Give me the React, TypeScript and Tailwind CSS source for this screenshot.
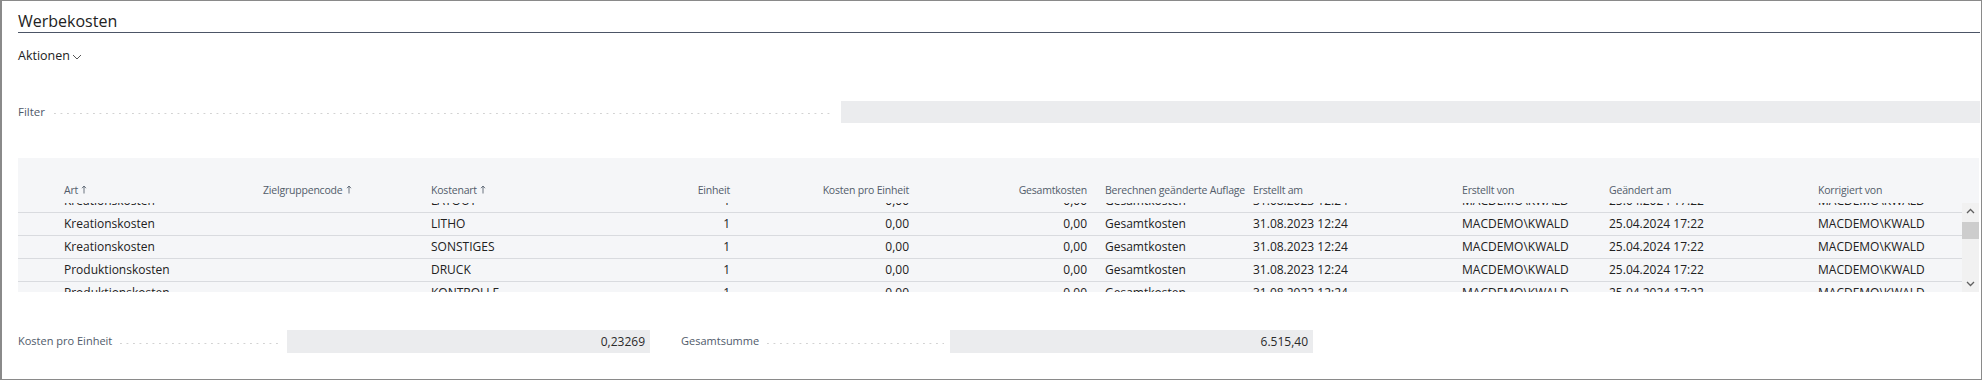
import React from 'react';

type Col = {
  label: string;
  w: string;
  right?: boolean;
  sort?: boolean;
};

const COLS: Col[] = [
  { label: 'Art', w: 'w-[199px] px-[6px]', sort: true },
  { label: 'Zielgruppencode', w: 'w-[168px] px-[6px]', sort: true },
  { label: 'Kostenart', w: 'w-[175px] px-[6px]', sort: true },
  { label: 'Einheit', w: 'w-[136px] px-[6px]', right: true },
  { label: 'Kosten pro Einheit', w: 'w-[179px] px-[6px]', right: true },
  { label: 'Gesamtkosten', w: 'w-[184px] pl-[6px] pr-[12px]', right: true },
  { label: 'Berechnen geänderte Auflage', w: 'w-[148px] px-[6px]' },
  { label: 'Erstellt am', w: 'w-[209px] px-[6px]' },
  { label: 'Erstellt von', w: 'w-[147px] px-[6px]' },
  { label: 'Geändert am', w: 'w-[209px] px-[6px]' },
  { label: 'Korrigiert von', w: 'w-[150px] px-[6px]' },
];

const ROWS: [string, string][] = [
  ['Kreationskosten', 'LAYOUT'],
  ['Kreationskosten', 'LITHO'],
  ['Kreationskosten', 'SONSTIGES'],
  ['Produktionskosten', 'DRUCK'],
  ['Produktionskosten', 'KONTROLLE'],
];

function rowValues(art: string, kostenart: string) {
  return [
    art,
    '',
    kostenart,
    '1',
    '0,00',
    '0,00',
    'Gesamtkosten',
    '31.08.2023 12:24',
    'MACDEMO\\KWALD',
    '25.04.2024 17:22',
    'MACDEMO\\KWALD',
  ];
}

function SortArrow() {
  return (
    <svg width="6" height="9" viewBox="0 0 6 9" className="ml-[3px] mb-[3px] inline-block" fill="none">
      <path d="M3 8.5V1M1 3.2L3 1l2 2.2" stroke="#5b6573" strokeWidth="0.9" />
    </svg>
  );
}

function Dots() {
  return (
    <div className="flex-1 h-px mt-[3px] bg-[linear-gradient(to_right,#d2d2d2_2px,transparent_2px)] bg-[length:6.5px_1px] bg-repeat-x" />
  );
}

function Field({ label, value }: { label: string; value: string }) {
  return (
    <div className="flex items-center">
      <div className="w-[263px] flex items-center gap-[8px]">
        <span className="text-[11px] text-[#4f5a6a]">{label}</span>
        <Dots />
      </div>
      <div className="ml-[6px] w-[363px] h-[23px] bg-[#ebecee] px-[5px] text-right text-[12px] leading-[23px] text-[#2a2a2a]">
        {value}
      </div>
    </div>
  );
}

export default function App() {
  return (
    <div className="w-[1982px] h-[380px] border border-l-2 border-[#8a8a8a] pl-[16px] pr-[1px] pt-[10px] bg-white font-['Open_Sans',sans-serif] overflow-hidden">
      {/* Title */}
      <div className="border-b border-[#4c5566] pb-[1px]">
        <h1 className="text-[16px] leading-[20px] text-[#222]">Werbekosten</h1>
      </div>

      {/* Actions */}
      <div className="mt-[14px] flex items-center h-[18px] text-[12.5px] text-[#222]">
        Aktionen
        <svg width="10" height="6" viewBox="0 0 10 6" className="ml-[2px] mt-[2px]" fill="none">
          <path d="M1 1l4 4 4-4" stroke="#444" strokeWidth="0.9" />
        </svg>
      </div>

      {/* Filter */}
      <div className="mt-[36px] flex items-center">
        <div className="w-[815px] flex items-center gap-[9px]">
          <span className="text-[11.5px] text-[#4f5a6a]">Filter</span>
          <Dots />
        </div>
        <div className="ml-[8px] flex-1 h-[22px] bg-[#ebecee]" />
      </div>

      {/* Table */}
      <div className="mt-[35px] bg-[#f5f6f8] w-[1961px]">
        <div className="flex items-end h-[45px] pb-[6px]">
          <div className="w-[40px]" />
          {COLS.map((c) => (
            <div
              key={c.label}
              className={`${c.w} ${c.right ? 'text-right' : 'text-left'} text-[10.5px] tracking-[-0.2px] leading-[14px] text-[#525c6a] whitespace-nowrap`}
            >
              {c.label}
              {c.sort && <SortArrow />}
            </div>
          ))}
        </div>

        <div className="flex h-[89px]">
          <div className="w-[1944px] overflow-hidden">
            <div className="-mt-[13px]">
              {ROWS.map(([art, ka]) => (
                <div key={ka} className="flex h-[23px] border-b border-[#d9dbdf]">
                  <div className="w-[40px]" />
                  {rowValues(art, ka).map((v, i) => (
                    <div
                      key={i}
                      className={`${COLS[i].w} ${COLS[i].right ? 'text-right' : 'text-left'} text-[12px] leading-[22px] text-[#212121] whitespace-nowrap`}
                    >
                      {v}
                    </div>
                  ))}
                </div>
              ))}
            </div>
          </div>

          {/* Scrollbar */}
          <div className="w-[17px] bg-[#f1f1f1] flex flex-col items-center">
            <svg width="9" height="6" viewBox="0 0 9 6" className="mt-[5px]" fill="none">
              <path d="M1 5l3.5-3.5L8 5" stroke="#606060" strokeWidth="1.3" />
            </svg>
            <div className="mt-[8px] w-[17px] h-[17px] bg-[#cdcdcd]" />
            <div className="flex-1" />
            <svg width="9" height="6" viewBox="0 0 9 6" className="mb-[5px]" fill="none">
              <path d="M1 1l3.5 3.5L8 1" stroke="#606060" strokeWidth="1.3" />
            </svg>
          </div>
        </div>
      </div>

      {/* Totals */}
      <div className="mt-[38px] flex items-center gap-[31px]">
        <Field label="Kosten pro Einheit" value="0,23269" />
        <Field label="Gesamtsumme" value="6.515,40" />
      </div>
    </div>
  );
}
